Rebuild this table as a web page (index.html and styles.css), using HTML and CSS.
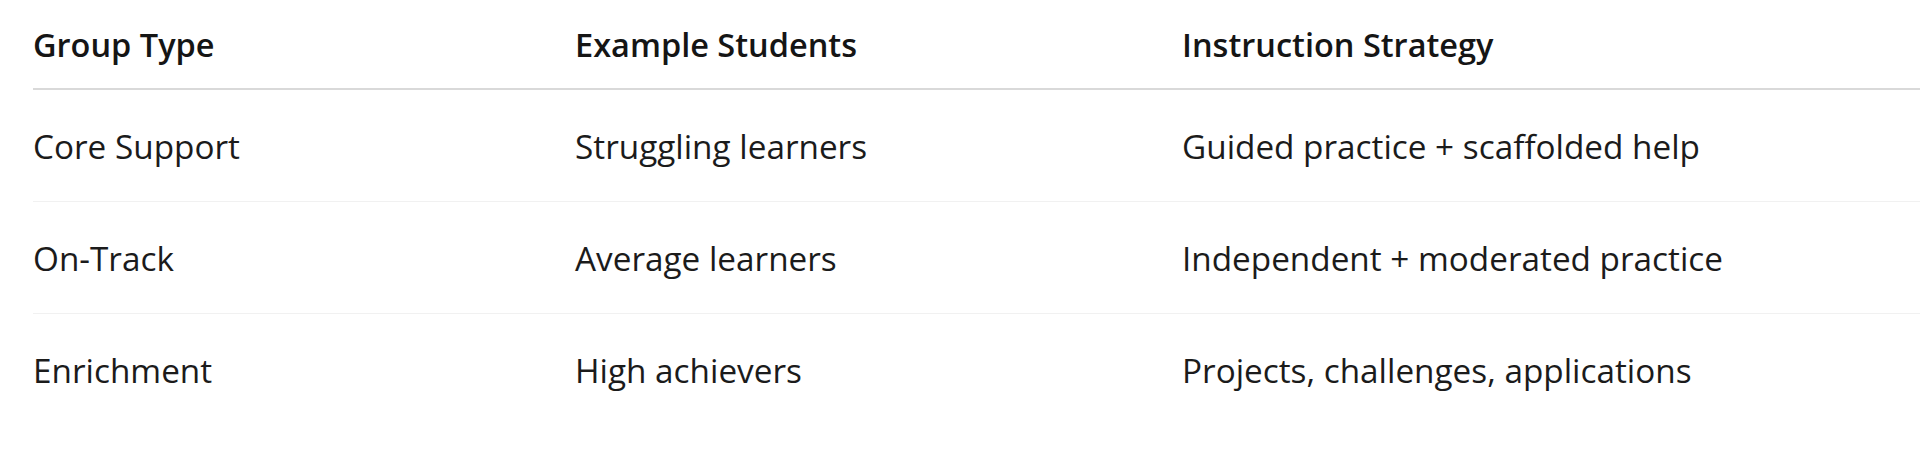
FILE: index.html
```html
<!DOCTYPE html>
<html lang="en">
<head>
<meta charset="utf-8">
<title>Grouping</title>
<link rel="stylesheet" href="styles.css">
</head>
<body>
<div class="wrap">
  <div class="table">
    <div class="row head">
      <div class="cell">Group Type</div>
      <div class="cell">Example Students</div>
      <div class="cell">Instruction Strategy</div>
    </div>
    <div class="row">
      <div class="cell">Core Support</div>
      <div class="cell">Struggling learners</div>
      <div class="cell">Guided practice + scaffolded help</div>
    </div>
    <div class="row">
      <div class="cell">On-Track</div>
      <div class="cell">Average learners</div>
      <div class="cell">Independent + moderated practice</div>
    </div>
    <div class="row last">
      <div class="cell">Enrichment</div>
      <div class="cell">High achievers</div>
      <div class="cell">Projects, challenges, applications</div>
    </div>
  </div>
</div>
</body>
</html>
```
FILE: styles.css
```css
html, body {
  margin: 0;
  padding: 0;
  background: #ffffff;
}
.wrap {
  padding-left: 33px;
  font-family: "Open Sans", "Noto Sans", sans-serif;
  font-size: 33.3px;
  line-height: 48px;
  color: #1b1b1b;
}
.table {
  display: flex;
  flex-direction: column;
}
.row {
  display: grid;
  grid-template-columns: 542px 607px 1fr;
  padding: 32px 0 31px;
  border-bottom: 1px solid #f1f1f1;
}
.row.head {
  padding: 21px 0 19px;
  border-bottom: 2px solid #d9d9d9;
  font-weight: 600;
  font-size: 32.5px;
  color: #151515;
}
.row.last {
  border-bottom: none;
}
.cell {
  white-space: nowrap;
}
```
